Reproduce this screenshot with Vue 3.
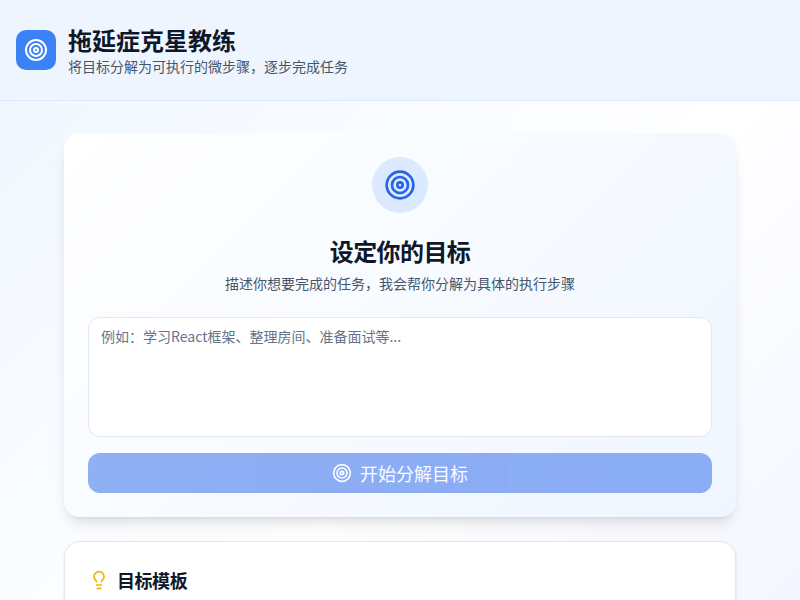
<script setup>
const placeholder = '例如：学习React框架、整理房间、准备面试等...'
</script>

<template>
  <div class="page">
    <header class="header">
      <div class="logo">
        <svg width="24" height="24" viewBox="0 0 24 24" fill="none" stroke="#fff" stroke-width="2" stroke-linecap="round" stroke-linejoin="round">
          <circle cx="12" cy="12" r="10" /><circle cx="12" cy="12" r="6" /><circle cx="12" cy="12" r="2" />
        </svg>
      </div>
      <div class="brand">
        <h1>拖延症克星教练</h1>
        <p>将目标分解为可执行的微步骤，逐步完成任务</p>
      </div>
    </header>
    <main class="main">
      <section class="goal-card">
        <div class="goal-icon">
          <svg width="32" height="32" viewBox="0 0 24 24" fill="none" stroke="#2563eb" stroke-width="2" stroke-linecap="round" stroke-linejoin="round">
            <circle cx="12" cy="12" r="10" /><circle cx="12" cy="12" r="6" /><circle cx="12" cy="12" r="2" />
          </svg>
        </div>
        <h2>设定你的目标</h2>
        <p class="desc">描述你想要完成的任务，我会帮你分解为具体的执行步骤</p>
        <textarea class="input" :placeholder="placeholder"></textarea>
        <button class="start" disabled>
          <svg width="20" height="20" viewBox="0 0 24 24" fill="none" stroke="#fff" stroke-width="2" stroke-linecap="round" stroke-linejoin="round">
            <circle cx="12" cy="12" r="10" /><circle cx="12" cy="12" r="6" /><circle cx="12" cy="12" r="2" />
          </svg>
          <span>开始分解目标</span>
        </button>
      </section>
      <section class="template-card">
        <div class="template-head">
          <svg width="20" height="20" viewBox="0 0 24 24" fill="none" stroke="#eab308" stroke-width="2" stroke-linecap="round" stroke-linejoin="round">
            <path d="M15 14c.2-1 .7-1.7 1.5-2.5 1-.9 1.5-2.2 1.5-3.5A6 6 0 0 0 6 8c0 1 .2 2.2 1.5 3.5.7.7 1.3 1.5 1.5 2.5" />
            <path d="M9 18h6" /><path d="M10 22h4" />
          </svg>
          <h3>目标模板</h3>
        </div>
      </section>
    </main>
  </div>
</template>

<style>
html, body { margin: 0; height: 100%; overflow: hidden; }
</style>

<style scoped>
.page {
  height: 900px;
  box-sizing: border-box;
  background: linear-gradient(135deg, #eff6ff 0%, #ffffff 50%, #eef2ff 100%);
  font-family: "Noto Sans CJK SC", "Noto Sans", sans-serif;
}
.header {
  box-sizing: border-box;
  height: 101px;
  display: flex;
  align-items: center;
  gap: 12px;
  padding: 0 16px;
  background: #eff5ff;
  border-bottom: 1px solid #dbeafe;
}
.logo {
  width: 40px;
  height: 40px;
  border-radius: 10px;
  background: #3b82f6;
  display: flex;
  align-items: center;
  justify-content: center;
}
.brand h1 {
  margin: 0;
  font-size: 24px;
  line-height: 32px;
  font-weight: 700;
  color: #0f172a;
}
.brand p {
  margin: 0;
  font-size: 14px;
  line-height: 20px;
  color: #475569;
}
.main {
  width: 672px;
  margin: 0 auto;
  padding-top: 32px;
}
.goal-card {
  box-sizing: border-box;
  padding: 24px;
  height: 384px;
  border-radius: 16px;
  background: linear-gradient(135deg, #ffffff, #eff6ff);
  box-shadow: 0 10px 15px -3px rgba(0, 0, 0, 0.1), 0 4px 6px -4px rgba(0, 0, 0, 0.1);
  display: flex;
  flex-direction: column;
  align-items: center;
}
.goal-icon {
  width: 56px;
  height: 56px;
  border-radius: 50%;
  background: #dbeafe;
  display: flex;
  align-items: center;
  justify-content: center;
  margin-bottom: 22px;
}
.goal-card h2 {
  margin: 0 0 6px;
  font-size: 24px;
  line-height: 32px;
  font-weight: 700;
  letter-spacing: -0.6px;
  color: #0f172a;
}
.desc {
  margin: 0 0 24px;
  font-size: 14px;
  line-height: 20px;
  color: #475569;
}
.input {
  box-sizing: border-box;
  width: 100%;
  height: 120px;
  padding: 8px 12px;
  border: 1px solid #e2e8f0;
  border-radius: 12px;
  background: #fff;
  font-family: inherit;
  font-size: 14px;
  line-height: 20px;
  resize: none;
  outline: none;
  margin-bottom: 16px;
  display: block;
}
.input::placeholder { color: #64748b; opacity: 1; }
.start {
  width: 100%;
  height: 40px;
  border: 0;
  border-radius: 12px;
  background: #2563eb;
  opacity: 0.5;
  color: #fff;
  font-family: inherit;
  font-size: 18px;
  display: flex;
  align-items: center;
  justify-content: center;
  gap: 8px;
  padding: 0;
}
.template-card {
  box-sizing: border-box;
  margin-top: 24px;
  height: 200px;
  padding: 24px;
  border: 1px solid #e2e8f0;
  border-radius: 16px;
  background: #fff;
  box-shadow: 0 1px 3px rgba(0, 0, 0, 0.1);
}
.template-head {
  display: flex;
  align-items: center;
  gap: 8px;
}
.template-head h3 {
  margin: 0;
  font-size: 18px;
  line-height: 28px;
  font-weight: 700;
  letter-spacing: -0.45px;
  color: #0f172a;
}
</style>
